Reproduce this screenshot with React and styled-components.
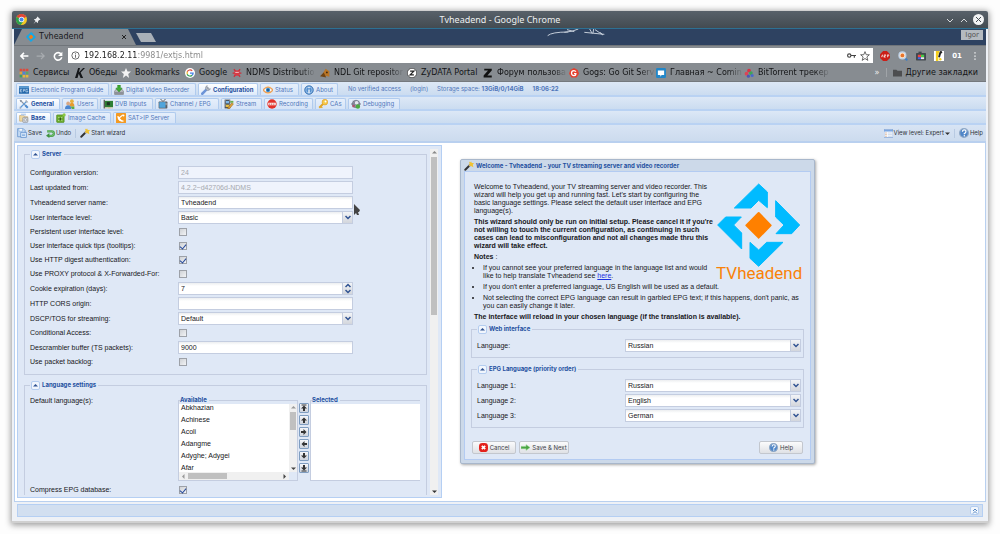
import React from 'react';
import styled, { ThemeProvider, createGlobalStyle, css } from 'styled-components';

const theme = {
  colors: {
    page: '#fdfdfd',
    panel: '#dfe8f6',
    line: '#b5cff3',
    border: '#c4cde0',
    title: '#2450a0',
    link: '#4f76ba',
    text: '#17171a',
    chrome: '#878c91',
    navy: '#2e4261',
  },
  fonts: {
    form: '"Liberation Sans", Arial, sans-serif',
    ui: 'Inter, "Liberation Sans", sans-serif',
    browser: '"DejaVu Sans", sans-serif',
    title: '"Noto Sans", sans-serif',
  },
};

const GlobalStyle = createGlobalStyle`
  * {
    box-sizing: border-box;
  }
  body {
    margin: 0;
    background: #fdfdfd;
  }
  button, input, select {
    margin: 0;
    padding: 0;
    border: 0;
    background: none;
    color: inherit;
    font: inherit;
  }
`;

/* ---------- icons ---------- */

const shapes = {
  epg: (
    <>
      <rect y="2" width="16" height="12" rx="1" fill="#2468ab" />
      <path d="M0 3a1 1 0 0 1 1-1h14a1 1 0 0 1 1 1v2H0z" fill="#5b9bd2" />
      <path d="M5 7H2v4h3M2 9h2M7 11V7h2v2H7M14 7h-3v4h3V9.500h-1" fill="none" stroke="#d5e6f6" />
    </>
  ),
  dvr: (
    <>
      <path d="M1 10l2-3h10l2 3v5H1z" fill="#b9bcc2" stroke="#777" />
      <path d="M1 11h14v4H1z" fill="#8d9199" />
      <path d="M6 0h4v5h3l-5 6-5-6h3z" fill="#3fae35" stroke="#2a8a22" />
    </>
  ),
  wrench: (
    <>
      <path d="M2 14l7-7" stroke="#6c94d8" strokeWidth="4" strokeLinecap="round" />
      <path d="M9 7l3-3" stroke="#9aa0aa" strokeWidth="3" />
      <path d="M10 1a4 4 0 1 0 5 5l-3 .5L10 5l-.5-2z" fill="#b8bec8" stroke="#858c98" />
    </>
  ),
  eye: (
    <>
      <circle cx="8" cy="8" r="7" fill="#fbe5c8" />
      <path d="M0 8q8-9 16 0-8 9-16 0z" fill="#fff" stroke="#eaa05a" strokeWidth="2" />
      <circle cx="8" cy="8" r="3.500" fill="#3c8fd0" />
      <circle cx="8" cy="8" r="1.500" fill="#174a7c" />
    </>
  ),
  info: (
    <>
      <circle cx="8" cy="8" r="7" fill="#5590d0" stroke="#2e66a6" />
      <circle cx="8" cy="8" r="5" fill="none" stroke="#b9d4f0" />
      <path d="M8 3v2M8 7v6" stroke="#fff" strokeWidth="2" />
    </>
  ),
  tools: (
    <>
      <path d="M3 3l11 11" stroke="#8b95a3" strokeWidth="2" />
      <path d="M1 1l4 1-3 3z" fill="#8b95a3" />
      <path d="M13 3L2 14" stroke="#5e9ad8" strokeWidth="2" />
      <path d="M11 1l4 4-3 1-2-2zM1 12l3 3-3 1z" fill="#a9b0ba" />
      <path d="M10 10l4 4" stroke="#4e8ed4" strokeWidth="3" />
    </>
  ),
  users: (
    <>
      <circle cx="11" cy="3.500" r="3" fill="#e8b13c" />
      <path d="M7 12q0-6 4-6t4 6z" fill="#e79a2e" />
      <circle cx="5" cy="7" r="3" fill="#d8a884" />
      <path d="M0 16q0-6 5-6t5 6z" fill="#4c86cf" />
      <path d="M9 12h6v4h-4z" fill="#5caa45" />
    </>
  ),
  dvb: (
    <>
      <rect x="2" y="3" width="14" height="10" fill="#2f7f35" />
      <rect x="6" y="5" width="5" height="5" fill="#1d3324" />
      <path d="M1 1h2v14H1z" fill="#555" />
      <path d="M4 14h11" stroke="#caa64a" strokeWidth="2" strokeDasharray="1 1" />
    </>
  ),
  tv: (
    <>
      <path d="M4 0l4 4 4-4" fill="none" stroke="#555" strokeWidth="1.500" />
      <rect x="1" y="4" width="14" height="11" rx="1" fill="#5a5f66" />
      <rect x="2" y="5" width="10" height="9" fill="#4fa5dc" />
      <path d="M12 7h2M12 9h2" stroke="#ddd" />
    </>
  ),
  stream: (
    <>
      <rect x="1" y="1" width="9" height="14" fill="#3f4650" />
      <path d="M2 2v12M9 2v12" stroke="#fff" strokeDasharray="1 1" />
      <rect x="3" y="3" width="5" height="4" fill="#7db7ea" />
      <rect x="3" y="9" width="5" height="4" fill="#e7bf46" />
      <path d="M7 13l6-7 2 2-6 7-3 1z" fill="#e8a63a" stroke="#976a1c" />
      <path d="M10 3h5v3h-5z" fill="#69ad4b" />
    </>
  ),
  record: (
    <>
      <circle cx="8" cy="8" r="7.500" fill="#e33129" />
      <path d="M2 6h12v4H2z" fill="#fff" />
      <path d="M3 8h10" stroke="#d8655f" strokeWidth="2" strokeDasharray="2 1" />
    </>
  ),
  key: (
    <>
      <path d="M8 8l-6 6" stroke="#e0a528" strokeWidth="3" />
      <path d="M4 12l3 2" stroke="#e0a528" strokeWidth="2" />
      <circle cx="11" cy="5" r="4.500" fill="#f5c94b" stroke="#dd9c28" />
      <circle cx="12" cy="4" r="1.500" fill="#fff" />
    </>
  ),
  bug: (
    <>
      <circle cx="8" cy="8" r="6" fill="#9195a5" stroke="#62667a" />
      <path d="M3 3l10 10M13 3L3 13M0 8h16" stroke="#75798c" strokeWidth="1.500" />
      <circle cx="9" cy="6" r="3" fill="#e4e6ee" />
      <circle cx="11" cy="12" r="3.500" fill="#4baa3f" />
      <circle cx="4" cy="11" r="2" fill="#b45068" />
    </>
  ),
  base: (
    <>
      <path d="M1 4h7l1 2h5v7H1z" fill="#f0d9a0" stroke="#c6a468" />
      <rect x="6" y="7" width="8" height="8" rx="1" fill="#d4d8de" stroke="#858b95" />
      <circle cx="10" cy="11" r="2" fill="#f7f7f7" stroke="#858b95" />
      <path d="M3 1h8v3H3z" fill="#b9cfec" />
    </>
  ),
  image: (
    <>
      <rect x="1" y="3" width="12" height="12" rx="1" fill="#6cad2e" stroke="#4b8620" />
      <path d="M4 7l6 5M10 7l-6 5" stroke="#f4ffe8" strokeWidth="1.500" />
      <circle cx="7" cy="9.500" r="2" fill="#2f5a12" />
      <circle cx="13" cy="3" r="2.500" fill="#8bc744" />
    </>
  ),
  rss: (
    <>
      <rect width="16" height="16" rx="1" fill="#f49a22" />
      <path d="M3 5q1 8 9 8M5 8l6-5" fill="none" stroke="#fff" strokeWidth="2" />
      <path d="M3 5l8 8q-8 1-8-8z" fill="#fff" />
      <circle cx="12" cy="4" r="1.500" fill="#fff" />
    </>
  ),
  save: (
    <>
      <path d="M1 1h9l3 3v10H1z" fill="#c4dbf5" stroke="#4c82c6" />
      <path d="M3 1h6v4H3z" fill="#fff" stroke="#7ba6dc" />
      <path d="M6 7h9v8H6z" fill="#e2eefb" stroke="#3f78c0" />
      <path d="M8 10h5M8 12h5" stroke="#5d93d6" />
    </>
  ),
  undo: (
    <>
      <path d="M2 4h8a4 4 0 0 1 0 8H5" fill="none" stroke="#4aa04a" strokeWidth="4" />
      <path d="M2 4h8a4 4 0 0 1 0 8H5" fill="none" stroke="#8fd08a" />
      <path d="M6 7v9l-6-4z" fill="#3f913f" />
    </>
  ),
  wand: (
    <>
      <path d="M2 14L10 6" stroke="#333" strokeWidth="3" strokeLinecap="round" />
      <path d="M8 8l3-3" stroke="#a5a5a5" strokeWidth="3" />
      <path d="M11 0l1.500 3L16 3l-2 3 1 4-4-2-3-1 1-3-1-3 3 1z" fill="#f1c232" />
    </>
  ),
  view: (
    <>
      <rect x="0" y="1" width="16" height="14" fill="#f5f9ff" stroke="#6b94cc" />
      <path d="M0 3h16" stroke="#7ca7e0" strokeWidth="3" />
      <path d="M2 7h3M2 10h3M2 13h3" stroke="#cf8f58" />
      <path d="M7 7h7M7 10h7M7 13h7" stroke="#b4c5dc" />
    </>
  ),
  help: (
    <>
      <circle cx="8" cy="8" r="7" fill="#4f86c8" stroke="#8fa8c6" strokeWidth="2" />
      <path d="M5.500 6q0-3 3-3t2.500 3q0 1.500-2.500 3v1" fill="none" stroke="#fff" strokeWidth="2" />
      <circle cx="8.500" cy="12.500" r="1.200" fill="#fff" />
    </>
  ),
  cancel: (
    <>
      <rect width="16" height="16" rx="6" fill="#e3221c" />
      <path d="M5 5l6 6M11 5l-6 6" stroke="#fff" strokeWidth="3" />
    </>
  ),
  next: <path d="M0 6h9V3l7 5-7 5v-3H0z" fill="#4aa544" stroke="#8ccf84" />,
  tvh: (
    <>
      <path d="M8 0l3 2v4L8 4 5 6H2zM16 8l-3 3H9l3-3-2-3V2zM8 16l-3-3V9l3 3 3-2h3zM0 8l2-3h4L4 8l2 3v3z" fill="#12a8e8" />
      <path d="M8 4.500L11.500 8 8 11.500 4.500 8z" fill="#f47c12" />
    </>
  ),
  chrome: (
    <>
      <circle cx="8" cy="8" r="8" fill="#f3c724" />
      <path d="M8 8L1 4a8 8 0 0 0 6 12l4-6z" fill="#2ea24d" />
      <path d="M1 4a8 8 0 0 1 14 0L8 8z" fill="#df4537" />
      <circle cx="8" cy="8" r="4" fill="#fff" />
      <circle cx="8" cy="8" r="3" fill="#4587e8" />
    </>
  ),
  pin: (
    <path d="M9 1l6 6-2 1-1 0-2 3v2l-1 1-3-3-5 5 4-6-3-3 1-1h2l3-3V2z" fill="#eceef0" />
  ),
  back: <path d="M15 8H3M8 3L3 8l5 5" fill="none" stroke="#fff" strokeWidth="2.500" />,
  forward: <path d="M1 8h12M8 3l5 5-5 5" fill="none" stroke="#a8acb0" strokeWidth="2" />,
  reload: (
    <>
      <path d="M13 5a6 6 0 1 0 1 5" fill="none" stroke="#fff" strokeWidth="2.500" />
      <path d="M15 1v7H8z" fill="#fff" />
    </>
  ),
  site: (
    <>
      <circle cx="8" cy="8" r="6.500" fill="none" stroke="#555" strokeWidth="1.500" />
      <path d="M8 4v2M8 7v5" stroke="#555" strokeWidth="1.500" />
    </>
  ),
  passkey: (
    <>
      <circle cx="4" cy="8" r="3" fill="none" stroke="#444" strokeWidth="2" />
      <path d="M7 8h9M13 8v4" stroke="#444" strokeWidth="2" />
    </>
  ),
  star: (
    <path d="M8 1l2 5h5l-4 3.500 1.500 5.500L8 12l-4.500 3L5 9.500 1 6h5z" fill="none" stroke="#555" strokeWidth="1.400" />
  ),
  abp: (
    <>
      <path d="M5 0h6l5 5v6l-5 5H5l-5-5V5z" fill="#cb1f18" />
      <path d="M2 10l2-4 1 4M7 6v4M7 6h2v2H7v2h2M12 10V6h2v2h-2" fill="none" stroke="#fff" />
    </>
  ),
  lens: (
    <>
      <path d="M10 10l5 5" stroke="#3f7fc4" strokeWidth="3" />
      <circle cx="7" cy="7" r="5.500" fill="#fde3cc" stroke="#bcd2ea" strokeWidth="2" />
      <circle cx="7" cy="7" r="3" fill="#e8742a" />
    </>
  ),
  camera: (
    <>
      <rect y="3" width="16" height="12" rx="1" fill="#42484f" />
      <path d="M4 1h5v3H4z" fill="#42484f" />
      <path d="M3 6h5v4H3z" fill="#e44" />
      <path d="M8 6h5v4H8z" fill="#4c4" />
      <path d="M3 10h5v3H3z" fill="#46e" />
      <path d="M8 10h5v3H8z" fill="#eee" />
    </>
  ),
  note: (
    <>
      <rect width="16" height="16" fill="#fff" />
      <path d="M3 0h6l-3 9H3zM3 9h4v7H3z" fill="#f4cf1e" />
      <path d="M10 3l-2 7" stroke="#222" strokeWidth="3" />
      <circle cx="11" cy="2" r="2" fill="#222" />
      <circle cx="10" cy="13" r="2" fill="#f4cf1e" />
    </>
  ),
  menu: <path d="M7 2h2v2H7zM7 7h2v2H7zM7 12h2v2H7z" fill="#fff" />,
  apps: (
    <>
      <path d="M1 1h4v4H1zM6 1h4v4H6zM11 1h4v4h-4z" fill="#dc4b3e" />
      <path d="M1 6h4v4H1z" fill="#e0a03a" />
      <path d="M6 6h4v4H6z" fill="#4a86d8" />
      <path d="M11 6h4v4h-4z" fill="#5aa867" />
      <path d="M1 11h4v4H1z" fill="#3fa05c" />
      <path d="M6 11h4v4H6zM11 11h4v4h-4z" fill="#e5b83b" />
    </>
  ),
  kino: <path d="M5 0h3L6 7l7-7h3l-7 7 4 9H9L6 9l-2 7H0z" fill="#15171a" />,
  solidStar: <path d="M8 0l2.500 5.500H16l-4.500 4L13 16l-5-4-5 4 1.500-6.500L0 5.500h5.500z" fill="#f4f4f4" />,
  google: (
    <>
      <circle cx="8" cy="8" r="8" fill="#fff" />
      <path d="M11.500 4.500A5 5 0 0 0 3.500 6" fill="none" stroke="#e24a3b" strokeWidth="2" />
      <path d="M3.500 6v4" stroke="#efb92e" strokeWidth="2" />
      <path d="M3.500 10a5 5 0 0 0 8 1.500" fill="none" stroke="#35a255" strokeWidth="2" />
      <path d="M8 8h5q0 2-1.500 3.500" fill="none" stroke="#4580e6" strokeWidth="2" />
    </>
  ),
  ndms: (
    <>
      <path d="M3 2l10 12M13 2L3 14M1 8h14" stroke="#d02c38" strokeWidth="2" />
      <circle cx="8" cy="8" r="4.500" fill="#d83a44" />
      <circle cx="6.500" cy="7" r="1" fill="#fff" />
      <circle cx="9.500" cy="7" r="1" fill="#fff" />
    </>
  ),
  ndl: (
    <>
      <path d="M3 11L9 1l6 4v9z" fill="#b97526" />
      <path d="M0 13l6-6 4 8z" fill="#704313" />
      <circle cx="11" cy="7" r="1.500" fill="#3e260d" />
    </>
  ),
  zydata: (
    <>
      <circle cx="8" cy="8" r="7.500" fill="#fff" stroke="#222" />
      <path d="M5 5h6l-6 6h6" fill="none" stroke="#222" strokeWidth="2" />
    </>
  ),
  zyxel: <path d="M2 1h12v3L7 12h7v3H1v-3l7-8H2z" fill="#111" />,
  gogs: (
    <>
      <path d="M8 0l6 3 2 6-4 6H4L0 9l2-6z" fill="#e4402f" />
      <path d="M11 6q-1-2-3-2-4 0-4 4t4 4q3 0 3-3H8" fill="none" stroke="#fff" strokeWidth="2" />
    </>
  ),
  comindware: (
    <>
      <rect width="16" height="16" rx="2" fill="#2387c8" />
      <path d="M3 4h10v7H9l-2 3v-3H3z" fill="#fff" />
    </>
  ),
  torrent: (
    <>
      <circle cx="8" cy="4" r="3" fill="#d83347" />
      <circle cx="4" cy="9" r="3" fill="#de4455" />
      <circle cx="11" cy="8" r="3" fill="#3fa35a" />
      <circle cx="7" cy="13" r="2.500" fill="#4b57b5" />
      <circle cx="13" cy="12" r="2.500" fill="#4968cf" />
    </>
  ),
  folder: <path d="M0 3h6l2 2h8v10H0z" fill="#4d4e50" />,
};

const Svg = styled.svg`
  display: block;
  flex: none;
`;

function Icon({ name, size = 10 }) {
  return (
    <Svg width={size} height={size} viewBox="0 0 16 16" aria-hidden="true">
      {shapes[name]}
    </Svg>
  );
}

/* ---------- desktop window ---------- */

const Page = styled.div`
  display: flex;
  height: 100vh;
  padding: 11px 12px;
  background: ${(props) => props.theme.colors.page};
`;

const Window = styled.div`
  display: flex;
  flex: 1;
  flex-direction: column;
  min-width: 0;
  border-bottom: 2px solid #d0d0d0;
  border-radius: 2px 2px 0 0;
  background: #eef1f6;
  box-shadow: 0 1px 6px 1px rgba(0, 0, 0, 0.4);
`;

const TitleBar = styled.header`
  display: grid;
  grid-template-columns: 1fr auto 1fr;
  align-items: center;
  height: 18px;
  padding: 0 4px;
  border-bottom: 1px solid #2d7093;
  border-radius: 2px 2px 0 0;
  background: linear-gradient(#58616a, #434b51);
  color: #eceff1;
  font: 9px/14px ${(props) => props.theme.fonts.title};
`;

const TitleIcons = styled.div`
  display: flex;
  align-items: center;
  justify-content: ${(props) => (props.$end ? 'flex-end' : 'flex-start')};
  gap: ${(props) => (props.$end ? '4px' : '6px')};
`;

const WindowButton = styled.button`
  display: flex;
`;

const Client = styled.div`
  display: flex;
  flex: 1;
  flex-direction: column;
  min-height: 0;
  margin: 0 2px 4px;
`;

/* ---------- browser ---------- */

const TabStrip = styled.div`
  display: flex;
  flex: none;
  height: 16px;
  background: ${(props) => props.theme.colors.navy};
  color: #17191b;
  font: 8px/16px ${(props) => props.theme.fonts.browser};
`;

const BrowserTab = styled.div`
  display: flex;
  align-items: center;
  gap: 3px;
  width: 122px;
  padding: 0 9px 0 12px;
  background: ${(props) => props.theme.colors.chrome};
  clip-path: polygon(0 100%, 8px 0, 114px 0, 100% 100%);
`;

const TabName = styled.span`
  flex: 1;
`;

const NewTab = styled.button`
  width: 20px;
  height: 9px;
  margin-top: 4px;
  background: #a9b0b8;
  clip-path: polygon(0 0, 15px 0, 100% 100%, 5px 100%);
`;

const Scribble = styled.div`
  display: flex;
  flex: 1;
  padding-left: 40%;
`;

const Profile = styled.button`
  height: 10px;
  margin: 1px 3px 0 0;
  padding: 0 4px;
  background: #b4bac0;
  color: #555;
  font-size: 7px;
  line-height: 10px;
`;

const AddressBar = styled.div`
  display: flex;
  flex: none;
  align-items: center;
  height: 19px;
  padding: 2px 6px 1px 5px;
  border-top: 1px solid #70757a;
  background: ${(props) => props.theme.colors.chrome};
  font: 8px/14px ${(props) => props.theme.fonts.browser};
`;

const NavButtons = styled.div`
  display: flex;
  gap: 7px;
  width: 49px;
`;

const IconButton = styled.button`
  display: flex;
`;

const Omnibox = styled.label`
  display: flex;
  flex: 1;
  align-items: center;
  gap: 4px;
  height: 15px;
  padding: 0 3px;
  background: #fff;
`;

const UrlInput = styled.input`
  flex: 1;
  min-width: 0;
  background: linear-gradient(90deg, #1d1d1d 54px, #858585 54px);
  background-clip: text;
  -webkit-text-fill-color: transparent;
  outline: none;
`;

const Extensions = styled.div`
  display: flex;
  align-items: center;
  gap: 8px;
  margin-left: 7px;
`;

const ExtensionLabel = styled.button`
  color: #fff;
  font-weight: bold;
  font-size: 7px;
`;

const BookmarksBar = styled.nav`
  display: flex;
  flex: none;
  align-items: center;
  height: 18px;
  padding: 0 8px 0 5px;
  border-bottom: 1px solid #75797e;
  background: ${(props) => props.theme.colors.chrome};
  font: 8px/16px ${(props) => props.theme.fonts.browser};
`;

const Bookmark = styled.a`
  display: flex;
  flex: none;
  align-items: center;
  gap: 4px;
  width: ${(props) => (props.$width ? `${props.$width}px` : 'auto')};
  color: #131416;
  text-decoration: none;
  white-space: nowrap;

  span {
    ${(props) => props.$fade && css`mask-image: linear-gradient(90deg, #000 80%, rgba(0, 0, 0, 0.1));`}
  }
`;

const BookmarksEnd = styled.div`
  display: flex;
  flex: none;
  align-items: center;
  gap: 6px;
  margin-left: auto;
`;

const More = styled.button`
  padding-right: 6px;
  border-right: 1px solid #a0a4a8;
  color: #eee;
  line-height: 9px;
`;

/* ---------- tvheadend toolbars ---------- */

const TabRow = styled.div`
  display: flex;
  flex: none;
  align-items: stretch;
  gap: 2px;
  height: ${(props) => (props.$first ? '15px' : '14px')};
  padding: 1px 2px 0;
  border-bottom: 2px solid #b9d2f3;
  background: linear-gradient(#dde8f6, #cbdcf0);
  color: ${(props) => props.theme.colors.link};
  font: 6px/12px ${(props) => props.theme.fonts.ui};
`;

const Tab = styled.button`
  display: flex;
  align-items: center;
  gap: 2px;
  width: ${(props) => props.$width}px;
  padding: 0 0 0 2px;
  border: 1px solid #b0cbee;
  border-bottom: 0;
  border-radius: 2px 2px 0 0;
  background: linear-gradient(#e6effb, #d6e4f7);
  white-space: nowrap;

  ${(props) =>
    props.$active &&
    css`
      background: linear-gradient(#fff, #deeafa);
      color: ${props.theme.colors.title};
      font-weight: bold;
    `}
`;

const Status = styled.div`
  display: flex;
  gap: 9px;
  padding-left: 8px;
  white-space: nowrap;

  a {
    color: inherit;
    text-decoration: none;
  }
`;

const Clock = styled.time`
  font-weight: bold;
`;

const Toolbar = styled.div`
  display: flex;
  flex: none;
  align-items: center;
  gap: 4px;
  height: 17px;
  padding: 0 3px;
  border-bottom: 1px solid #b9d0ef;
  background: linear-gradient(#d8e4f4, #ccdbee);
  color: #2f3338;
  font: 6px/12px ${(props) => props.theme.fonts.ui};
`;

const ToolButton = styled.button`
  display: flex;
  align-items: center;
  gap: 1px;
`;

const Separator = styled.span`
  width: 1px;
  height: 9px;
  background: #b8cae2;
`;

const Spacer = styled.span`
  flex: 1;
`;

/* ---------- form panel ---------- */

const Main = styled.main`
  display: flex;
  flex: 1;
  align-items: flex-start;
  min-height: 0;
  padding: 2px 2px 3px;
  border: 1px solid #b9d0ef;
  background: #fff;
  color: ${(props) => props.theme.colors.text};
  font: 7px/8px ${(props) => props.theme.fonts.form};
`;

const Panel = styled.section`
  display: flex;
  flex: none;
  align-self: stretch;
  width: 44%;
  padding: 3px 3px 2px 6px;
  border: 1px solid ${(props) => props.theme.colors.line};
  background: ${(props) => props.theme.colors.panel};
`;

const Scroller = styled.div`
  flex: 1;
  min-width: 0;
  overflow: hidden;
`;

const Fieldset = styled.fieldset`
  min-width: 0;
  margin: 0 0 ${(props) => (props.$dialog ? '6px' : '5px')};
  padding: ${(props) => (props.$dialog ? '4px 2px 4px 5px' : '6px 6px 5px 5px')};
  border: 1px solid ${(props) => props.theme.colors.border};
`;

const Legend = styled.legend`
  display: flex;
  align-items: center;
  gap: 2px;
  padding: 0 2px 0 1px;
  color: ${(props) => props.theme.colors.title};
  font: bold 6px/10px ${(props) => props.theme.fonts.ui};
`;

const Collapse = styled.button`
  display: flex;
  align-items: center;
  justify-content: center;
  width: 9px;
  height: 9px;
  border: 1px solid #b4cdf0;
  border-radius: 2px;
  background: #f1f6fd;
`;

const Row = styled.div`
  display: grid;
  grid-template-columns: 148px ${(props) => (props.$fluid ? '1fr' : '175px')};
  align-items: ${(props) => (props.$top ? 'start' : 'center')};
  min-height: ${(props) => (props.$check ? '14px' : '15px')};
`;

const RowLabel = styled.span`
  padding-top: 1px;
`;

const Box = styled.span`
  display: flex;
  height: 13px;
  border: 1px solid ${(props) => props.theme.colors.border};
  background: linear-gradient(#eceef0, #fff 3px);

  &:has(:disabled) {
    background: #eff3fc;
    color: #a5a8af;
  }
`;

const TextInput = styled.input`
  flex: 1;
  min-width: 0;
  padding: 0 2px;
  line-height: 11px;
  outline: none;
  appearance: textfield;

  &::-webkit-inner-spin-button {
    display: none;
  }
`;

const Select = styled.select`
  flex: 1;
  min-width: 0;
  padding: 0 2px;
  line-height: 11px;
  appearance: none;
  outline: none;
`;

const Trigger = styled.span`
  display: flex;
  flex-direction: column;
  align-items: center;
  justify-content: space-around;
  width: 10px;
  border-left: 1px solid #c4cde0;
  background: linear-gradient(#f2f4f7, #d3d6dc);
`;

const SpinButton = styled.button`
  display: flex;
`;

const Check = styled.input`
  appearance: none;
  display: flex;
  align-items: center;
  justify-content: center;
  width: 8px;
  height: 8px;
  margin-left: 1px;
  border: 1px solid #9da1a8;
  background: linear-gradient(135deg, #cfd2d6, #f2f3f5);

  &:checked::after {
    content: '';
    width: 3px;
    height: 5px;
    border: solid #24489a;
    border-width: 0 1px 1px 0;
    transform: rotate(40deg);
  }
`;

/* ---------- language picker ---------- */

const Picker = styled.div`
  display: flex;
  width: 242px;
  margin-bottom: 2px;
`;

const ListBox = styled.fieldset`
  display: grid;
  grid-template-columns: 1fr auto;
  width: ${(props) => props.$width}px;
  min-width: 0;
  height: 85px;
  margin: 0;
  padding: 0;
  border: 1px solid ${(props) => props.theme.colors.border};
  border-right-width: ${(props) => (props.$open ? '0' : '1px')};

  legend {
    margin-left: 1px;
    padding: 0 2px 0 0;
    color: ${(props) => props.theme.colors.title};
    font: bold 6px/8px ${(props) => props.theme.fonts.ui};
  }
`;

const MultiSelect = styled.select`
  width: 100%;
  height: ${(props) => (props.$tall ? '76px' : '68px')};
  padding: 0;
  border-radius: 0;
  background: #fff;
  overflow: hidden;
  outline: none;
  scrollbar-width: none;

  option {
    min-height: 12px;
    padding: 0 2px;
    line-height: 12px;
  }
`;

const MoveButtons = styled.div`
  display: flex;
  flex-direction: column;
  justify-content: space-between;
  width: 12px;
  padding: 7px 1px 8px;
`;

const MoveButton = styled.button`
  display: flex;
  align-items: center;
  justify-content: center;
  width: 10px;
  height: 10px;
  border: 1px solid #7f9dc0;
  border-radius: 1px;
  background: linear-gradient(#f6f7f9, #cdd3dc);
`;

const ScrollTrack = styled.div`
  display: flex;
  flex-direction: ${(props) => (props.$horizontal ? 'row' : 'column')};
  align-items: center;
  gap: 2px;
  width: ${(props) => (props.$horizontal ? 'auto' : '8px')};
  height: ${(props) => (props.$horizontal ? '8px' : 'auto')};
  margin-left: ${(props) => (props.$outer ? '3px' : '0')};
  padding: ${(props) => (props.$horizontal ? '0 2px' : '1px 0')};
  background: #f0f0f0;
`;

const ScrollThumb = styled.div`
  flex: 0 0 ${(props) => props.$length};
  align-self: stretch;
  margin: ${(props) => (props.$horizontal ? '1px 0' : '0 1px')};
  background: #c0c0c0;
`;

/* ---------- wizard ---------- */

const Wizard = styled.section`
  width: 355px;
  margin: 14px 0 0 18px;
  padding: 0 3px 3px;
  border: 1px solid #a8b7cb;
  border-radius: 2px;
  background: #ccd9e9;
  box-shadow: 1px 1px 3px rgba(0, 0, 0, 0.35);
`;

const WizardTitle = styled.h2`
  display: flex;
  align-items: center;
  gap: 2px;
  height: 11px;
  margin: 0;
  color: ${(props) => props.theme.colors.title};
  font: bold 6px/11px ${(props) => props.theme.fonts.ui};
`;

const WizardBody = styled.div`
  padding: 10px 6px 5px;
  border: 1px solid #b3cbf2;
  background: ${(props) => props.theme.colors.panel};
`;

const Intro = styled.div`
  padding: 1px 0 0 3px;

  p {
    margin: 0 0 3px;
  }
  ul {
    margin: 0 0 3px;
    padding-left: 9px;
  }
  li + li {
    margin-top: 3px;
  }
  a {
    color: #1a2fe0;
  }
`;

const Brand = styled.figure`
  float: right;
  width: 86px;
  height: 94px;
  margin: 0 2px 0 0;
  color: #f98208;
  font: 17px/13px Roboto, sans-serif;
  text-align: center;

  svg {
    display: block;
    margin: 0 auto;
  }
`;

const WizardFooter = styled.footer`
  display: flex;
  gap: 3px;
  margin-top: 13px;
  padding: 0 1px;
`;

const DialogButton = styled.button`
  display: flex;
  align-items: center;
  justify-content: center;
  gap: 2px;
  width: ${(props) => (props.$wide ? '50px' : '44px')};
  height: 13px;
  border: 1px solid #c3c7ce;
  border-radius: 2px;
  background: linear-gradient(#fbfbfc, #dfe1e5);
  color: #3f4247;
  font: 6px/11px ${(props) => props.theme.fonts.ui};
  white-space: nowrap;
`;

/* ---------- footer ---------- */

const BottomBar = styled.div`
  display: flex;
  flex: none;
  align-items: center;
  justify-content: flex-end;
  height: 13px;
  margin: 2px 3px 0;
  padding-right: 3px;
  border: 1px solid #b5cff3;
  background: #d2dff0;
`;

const Cursor = styled.svg`
  position: absolute;
  left: 354px;
  top: 204px;
`;

function Arrow({ dir = 'down', color = '#2f5292' }) {
  const turn = { down: 0, left: 90, up: 180, right: 270 }[dir];
  return (
    <Svg width="5" height="5" viewBox="0 0 10 10" aria-hidden="true">
      <path d="M0 3h10L5 8z" transform={`rotate(${turn} 5 5)`} fill={color} />
    </Svg>
  );
}

function Chevron({ up = false }) {
  return (
    <Svg width="6" height="5" viewBox="0 0 12 10" aria-hidden="true">
      <path
        d={up ? 'M1 8l5-5 5 5' : 'M1 2l5 5 5-5'}
        fill="none"
        stroke="#2f5292"
        strokeWidth="3"
      />
    </Svg>
  );
}

function DoubleChevron() {
  return (
    <Svg width="6" height="6" viewBox="0 0 12 12" aria-hidden="true">
      <path d="M2 6l4-4 4 4M2 11l4-4 4 4" fill="none" stroke="#5585c0" strokeWidth="2" />
    </Svg>
  );
}

function MoveGlyph({ dir, bar }) {
  const turn = { down: 0, left: 90, up: 180, right: 270 }[dir];
  return (
    <Svg width="8" height="8" viewBox="0 0 16 16" aria-hidden="true">
      <g transform={`rotate(${turn} 8 8)`} fill="#333">
        <path d="M6 2h4v5h4l-6 6-6-6h4z" />
        {bar && <path d="M3 13h10v2H3z" />}
      </g>
    </Svg>
  );
}

const bookmarks = [
  ['apps', 'Сервисы', 56],
  ['kino', 'Обеды', 46],
  ['solidStar', 'Bookmarks', 64],
  ['google', 'Google', 47],
  ['ndms', 'NDMS Distributio', 88, true],
  ['ndl', 'NDL Git repositor', 87, true],
  ['zydata', 'ZyDATA Portal', 76],
  ['zyxel', 'Форум пользова', 86, true],
  ['gogs', 'Gogs: Go Git Serv', 87, true],
  ['comindware', 'Главная ~ Comin', 88, true],
  ['torrent', 'BitTorrent трекер', 86, true],
];

const mainTabs = [
  ['epg', 'Electronic Program Guide', 93],
  ['dvr', 'Digital Video Recorder', 85],
  ['wrench', 'Configuration', 60],
  ['eye', 'Status', 39],
  ['info', 'About', 37],
];

const configTabs = [
  ['tools', 'General', 44],
  ['users', 'Users', 36],
  ['dvb', 'DVB Inputs', 53],
  ['tv', 'Channel / EPG', 64],
  ['stream', 'Stream', 41],
  ['record', 'Recording', 49],
  ['key', 'CAs', 31],
  ['bug', 'Debugging', 52],
];

const generalTabs = [
  ['base', 'Base', 35],
  ['image', 'Image Cache', 58],
  ['rss', 'SAT>IP Server', 63],
];

const serverFields = [
  { label: 'Configuration version:', type: 'text', value: '24', disabled: true },
  { label: 'Last updated from:', type: 'text', value: '4.2.2~d42706d-NDMS', disabled: true },
  { label: 'Tvheadend server name:', type: 'text', value: 'Tvheadend' },
  { label: 'User interface level:', type: 'select', value: 'Basic' },
  { label: 'Persistent user interface level:', type: 'check' },
  { label: 'User interface quick tips (tooltips):', type: 'check', value: true },
  { label: 'Use HTTP digest authentication:', type: 'check', value: true },
  { label: 'Use PROXY protocol & X-Forwarded-For:', type: 'check' },
  { label: 'Cookie expiration (days):', type: 'number', value: '7' },
  { label: 'HTTP CORS origin:', type: 'text', value: '' },
  { label: 'DSCP/TOS for streaming:', type: 'select', value: 'Default' },
  { label: 'Conditional Access:', type: 'check' },
  { label: 'Descrambler buffer (TS packets):', type: 'text', value: '9000' },
  { label: 'Use packet backlog:', type: 'check' },
];

const languages = ['Abkhazian', 'Achinese', 'Acoli', 'Adangme', 'Adyghe; Adygei', 'Afar'];

const moves = [
  ['up', true],
  ['up', false],
  ['right', false],
  ['left', false],
  ['down', false],
  ['down', true],
];

function Tabs({ items, active, first, children }) {
  return (
    <TabRow $first={first}>
      {items.map(([icon, label, width]) => (
        <Tab key={label} $width={width} $active={label === active}>
          <Icon name={icon} />
          {label}
        </Tab>
      ))}
      {children}
    </TabRow>
  );
}

function Field({ label, type, value, disabled, fluid }) {
  const id = React.useId();
  return (
    <Row $check={type === 'check'} $fluid={fluid}>
      <label htmlFor={id}>{label}</label>
      {type === 'check' && <Check id={id} type="checkbox" defaultChecked={value} />}
      {type === 'select' && (
        <Box>
          <Select id={id} defaultValue={value}>
            <option>{value}</option>
          </Select>
          <Trigger>
            <Chevron />
          </Trigger>
        </Box>
      )}
      {(type === 'text' || type === 'number') && (
        <Box>
          <TextInput id={id} type={type} defaultValue={value} disabled={disabled} />
          {type === 'number' && (
            <Trigger>
              <SpinButton aria-label="Increase">
                <Chevron up />
              </SpinButton>
              <SpinButton aria-label="Decrease">
                <Chevron />
              </SpinButton>
            </Trigger>
          )}
        </Box>
      )}
    </Row>
  );
}

function Group({ title, dialog, children }) {
  return (
    <Fieldset $dialog={dialog}>
      <Legend>
        <Collapse aria-label={`Collapse ${title}`}>
          <Arrow dir="up" />
        </Collapse>
        {title}
      </Legend>
      {children}
    </Fieldset>
  );
}

function LanguagePicker() {
  return (
    <Picker>
      <ListBox $width={120}>
        <legend>Available</legend>
        <MultiSelect multiple aria-label="Available">
          {languages.map((name) => (
            <option key={name}>{name}</option>
          ))}
        </MultiSelect>
        <ScrollTrack>
          <Arrow dir="up" color="#999" />
          <ScrollThumb $length="18px" />
          <Spacer />
          <Arrow color="#444" />
        </ScrollTrack>
        <ScrollTrack $horizontal>
          <Arrow dir="left" color="#999" />
          <ScrollThumb $horizontal $length="39px" />
          <Spacer />
          <Arrow dir="right" color="#444" />
        </ScrollTrack>
      </ListBox>
      <MoveButtons>
        {moves.map(([dir, bar]) => (
          <MoveButton key={`${dir}${bar}`} aria-label={`Move ${dir}`}>
            <MoveGlyph dir={dir} bar={bar} />
          </MoveButton>
        ))}
      </MoveButtons>
      <ListBox $width={110} $open>
        <legend>Selected</legend>
        <MultiSelect multiple $tall aria-label="Selected" />
      </ListBox>
    </Picker>
  );
}

function BrandLogo() {
  return (
    <Brand>
      <svg width="84" height="84" viewBox="200 94 252 252" aria-hidden="true">
        <g fill="#00bbff" stroke="#00bbff" strokeWidth="3" strokeLinejoin="round">
          <path d="M325 97l26 24v47l-26-22-23 23h-50z" />
          <path d="M376 147l72 73-24 26h-47l24-26-25-24z" />
          <path d="M398 272l-73 72-26-24v-48l26 23 24-23z" />
          <path d="M202 220l24-24h47l-23 24 24 24v48z" />
        </g>
        <path
          d="M325 184l36 37-36 37-37-37z"
          fill="#ff8000"
          stroke="#ff8000"
          strokeWidth="6"
          strokeLinejoin="round"
        />
      </svg>
      <figcaption>TVheadend</figcaption>
    </Brand>
  );
}

function SetupWizard() {
  return (
    <Wizard>
      <WizardTitle>
        <Icon name="wand" />
        Welcome - Tvheadend - your TV streaming server and video recorder
      </WizardTitle>
      <WizardBody>
        <Intro>
          <BrandLogo />
          <p>
            Welcome to Tvheadend, your TV streaming server and video recorder. This wizard will
            help you get up and running fast. Let's start by configuring the basic language
            settings. Please select the default user interface and EPG language(s).
          </p>
          <p>
            <b>
              This wizard should only be run on initial setup. Please cancel it if you're not
              willing to touch the current configuration, as continuing in such cases can lead to
              misconfiguration and not all changes made thru this wizard will take effect.
            </b>
          </p>
          <p>
            <b>Notes</b> :
          </p>
          <ul>
            <li>
              If you cannot see your preferred language in the language list and would like to help
              translate Tvheadend see <a href="#translate">here</a>.
            </li>
            <li>If you don't enter a preferred language, US English will be used as a default.</li>
            <li>
              Not selecting the correct EPG language can result in garbled EPG text; if this
              happens, don't panic, as you can easily change it later.
            </li>
          </ul>
          <p>
            <b>
              The interface will reload in your chosen language (if the translation is available).
            </b>
          </p>
        </Intro>
        <Group title="Web interface" dialog>
          <Field fluid type="select" label="Language:" value="Russian" />
        </Group>
        <Group title="EPG Language (priority order)" dialog>
          <Field fluid type="select" label="Language 1:" value="Russian" />
          <Field fluid type="select" label="Language 2:" value="English" />
          <Field fluid type="select" label="Language 3:" value="German" />
        </Group>
        <WizardFooter>
          <DialogButton>
            <Icon name="cancel" size={9} />
            Cancel
          </DialogButton>
          <DialogButton $wide>
            <Icon name="next" size={9} />
            Save &amp; Next
          </DialogButton>
          <Spacer />
          <DialogButton>
            <Icon name="help" size={9} />
            Help
          </DialogButton>
        </WizardFooter>
      </WizardBody>
    </Wizard>
  );
}

function Browser() {
  return (
    <>
      <TabStrip>
        <BrowserTab>
          <Icon name="tvh" />
          <TabName>Tvheadend</TabName>
          <IconButton aria-label="Close tab">
            <svg width="6" height="6" viewBox="0 0 6 6">
              <path d="M1 1l4 4M5 1L1 5" stroke="#222" />
            </svg>
          </IconButton>
        </BrowserTab>
        <NewTab aria-label="New tab" />
        <Scribble>
          <svg width="62" height="8" viewBox="0 0 186 24" fill="none" stroke="#c3ccd8" strokeWidth="3">
            <path d="M8 20Q20 9 70 9M58 10q26-2 42-10M66 2l22 6M118 10l60 6M134 0l8 14M146 0l-2 12M150 2l24 16-8-8" />
          </svg>
        </Scribble>
        <Profile>Igor</Profile>
      </TabStrip>
      <AddressBar>
        <NavButtons>
          <IconButton aria-label="Back">
            <Icon name="back" />
          </IconButton>
          <IconButton aria-label="Forward">
            <Icon name="forward" />
          </IconButton>
          <IconButton aria-label="Reload">
            <Icon name="reload" />
          </IconButton>
        </NavButtons>
        <Omnibox>
          <Icon name="site" size={9} />
          <UrlInput aria-label="Address" defaultValue="192.168.2.11:9981/extjs.html" />
          <Icon name="passkey" size={9} />
          <Icon name="star" />
        </Omnibox>
        <Extensions>
          {['abp', 'lens', 'camera', 'note'].map((name) => (
            <IconButton key={name} aria-label={name}>
              <Icon name={name} />
            </IconButton>
          ))}
          <ExtensionLabel>01</ExtensionLabel>
          <IconButton aria-label="Menu">
            <Icon name="menu" />
          </IconButton>
        </Extensions>
      </AddressBar>
      <BookmarksBar>
        {bookmarks.map(([icon, label, width, fade]) => (
          <Bookmark key={label} href="#bookmark" $width={width} $fade={fade}>
            <Icon name={icon} />
            <span>{label}</span>
          </Bookmark>
        ))}
        <BookmarksEnd>
          <More aria-label="More bookmarks">»</More>
          <Bookmark href="#other">
            <Icon name="folder" size={9} />
            <span>Другие закладки</span>
          </Bookmark>
        </BookmarksEnd>
      </BookmarksBar>
    </>
  );
}

function App() {
  return (
    <ThemeProvider theme={theme}>
      <GlobalStyle />
      <Page>
        <Window>
          <TitleBar>
            <TitleIcons>
              <Icon name="chrome" size={11} />
              <Icon name="pin" size={8} />
            </TitleIcons>
            <span>Tvheadend - Google Chrome</span>
            <TitleIcons $end>
              <WindowButton aria-label="Minimize">
                <svg width="10" height="10" viewBox="0 0 10 10">
                  <path d="M2 4l3 3 3-3" fill="none" stroke="#d7dadd" />
                </svg>
              </WindowButton>
              <WindowButton aria-label="Maximize">
                <svg width="10" height="10" viewBox="0 0 10 10">
                  <path d="M2 7l3-3 3 3" fill="none" stroke="#d7dadd" />
                </svg>
              </WindowButton>
              <WindowButton aria-label="Close">
                <svg width="11" height="11" viewBox="0 0 11 11">
                  <circle cx="5.500" cy="5.500" r="5.500" fill="#f2f3f4" />
                  <path d="M3 3l5 5M8 3L3 8" stroke="#444c52" />
                </svg>
              </WindowButton>
            </TitleIcons>
          </TitleBar>
          <Client>
            <Browser />
            <Tabs first items={mainTabs} active="Configuration">
              <Status>
                <span>No verified access</span>
                <a href="#login">(login)</a>
                <span>
                  Storage space: <b>13GiB/0/14GiB</b>
                </span>
                <Clock>18:06:22</Clock>
              </Status>
            </Tabs>
            <Tabs items={configTabs} active="General" />
            <Tabs items={generalTabs} active="Base" />
            <Toolbar>
              <ToolButton>
                <Icon name="save" />
                Save
              </ToolButton>
              <ToolButton>
                <Icon name="undo" size={9} />
                Undo
              </ToolButton>
              <Separator />
              <ToolButton>
                <Icon name="wand" />
                Start wizard
              </ToolButton>
              <Spacer />
              <ToolButton>
                <Icon name="view" size={9} />
                View level: Expert
                <Arrow color="#333" />
              </ToolButton>
              <Separator />
              <ToolButton>
                <Icon name="help" />
                Help
              </ToolButton>
            </Toolbar>
            <Main>
              <Panel>
                <Scroller>
                  <Group title="Server">
                    {serverFields.map((field) => (
                      <Field key={field.label} {...field} />
                    ))}
                  </Group>
                  <Group title="Language settings">
                    <Row $top>
                      <RowLabel>Default language(s):</RowLabel>
                      <LanguagePicker />
                    </Row>
                    <Field type="check" label="Compress EPG database:" value />
                  </Group>
                </Scroller>
                <ScrollTrack $outer>
                  <Arrow dir="up" color="#888" />
                  <ScrollThumb $length="46%" />
                  <Spacer />
                  <Arrow color="#333" />
                </ScrollTrack>
              </Panel>
              <SetupWizard />
            </Main>
            <BottomBar>
              <Collapse aria-label="Expand log">
                <DoubleChevron />
              </Collapse>
            </BottomBar>
          </Client>
        </Window>
        <Cursor width="7" height="13" viewBox="0 0 7 13" aria-hidden="true">
          <path d="M0 0l6 6-1 2-1 0 1 3H3L2 9 0 11z" fill="#444" />
        </Cursor>
      </Page>
    </ThemeProvider>
  );
}

export default App;
